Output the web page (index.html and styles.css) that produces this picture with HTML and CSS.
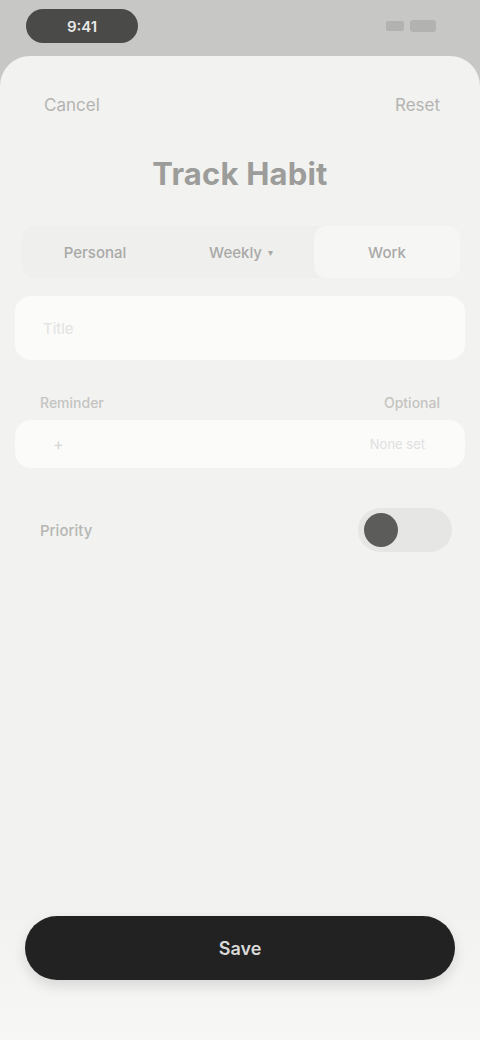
FILE: index.html
```html
<!DOCTYPE html>
<html>
<head>
<meta charset="utf-8">
<link rel="stylesheet" href="styles.css">
</head>
<body>
<div class="screen">
  <div class="statusbar">
    <div class="time-pill">9:41</div>
    <div class="status-icons">
      <span class="bars"></span>
      <span class="battery"></span>
    </div>
  </div>
  <div class="sheet">
    <div class="nav">
      <span class="nav-btn">Cancel</span>
      <span class="nav-btn">Reset</span>
    </div>
    <h1 class="title">Track Habit</h1>
    <div class="segmented">
      <div class="seg">Personal</div>
      <div class="seg">Weekly <span class="chev">&#9662;</span></div>
      <div class="seg seg-active">Work</div>
    </div>
    <div class="field">
      <span class="placeholder">Title</span>
    </div>
    <div class="label-row">
      <span class="label">Reminder</span>
      <span class="label">Optional</span>
    </div>
    <div class="field field-sm">
      <span class="field-icon">+</span>
      <span class="field-value">None set</span>
    </div>
    <div class="toggle-row">
      <span class="toggle-label">Priority</span>
      <div class="toggle"><span class="knob"></span></div>
    </div>
    <div class="spacer"></div>
    <div class="footer">
      <button class="primary">Save</button>
    </div>
  </div>
</div>
</body>
</html>
```
FILE: styles.css
```css
* { box-sizing: border-box; }
html, body { margin: 0; padding: 0; }
body {
  font-family: Inter, "Noto Sans", "Liberation Sans", sans-serif;
  color: #1c1c1c;
}
.screen {
  width: 480px;
  height: 1040px;
  background: #c7c7c5;
  display: flex;
  flex-direction: column;
  overflow: hidden;
}
.statusbar {
  height: 56px;
  display: flex;
  align-items: center;
  justify-content: space-between;
  padding: 0 44px 4px 26px;
}
.time-pill {
  width: 112px;
  height: 34px;
  border-radius: 17px;
  background: #4a4a48;
  color: #e8e8e8;
  font-size: 15px;
  font-weight: 600;
  display: flex;
  align-items: center;
  justify-content: center;
}
.status-icons {
  display: flex;
  align-items: center;
  gap: 6px;
}
.bars {
  width: 18px;
  height: 10px;
  background: #b2b2b0;
  border-radius: 2px;
}
.battery {
  width: 26px;
  height: 12px;
  border-radius: 3px;
  background: #b2b2b0;
}
.sheet {
  flex: 1;
  background: #f2f2f0;
  border-radius: 30px 30px 0 0;
  display: flex;
  flex-direction: column;
}
.nav {
  display: flex;
  justify-content: space-between;
  padding: 39px 40px 0 44px;
  height: 59px;
}
.nav-btn {
  font-size: 17px;
  color: #b4b4b2;
  line-height: 20px;
}
.title {
  margin: 41px 0 0;
  text-align: center;
  font-size: 31px;
  line-height: 36px;
  font-weight: 700;
  color: #9c9c9a;
  letter-spacing: 0.2px;
}
.segmented {
  margin: 34px 20px 0 22px;
  height: 52px;
  display: grid;
  grid-template-columns: 1fr 1fr 1fr;
  background: #efefed;
  border-radius: 14px;
  padding: 0;
}
.seg {
  display: flex;
  align-items: center;
  justify-content: center;
  font-size: 15px;
  color: #a9a9a7;
  font-weight: 500;
}
.chev { font-size: 10px; margin-left: 6px; }
.seg-active {
  background: #f6f6f5;
  border-radius: 12px;
}
.field {
  margin: 18px 15px 0;
  height: 64px;
  background: #fbfbfa;
  border-radius: 16px;
  display: flex;
  align-items: center;
  padding: 0 28px;
}
.placeholder {
  font-size: 15px;
  color: #e2e2e0;
}
.label-row {
  margin: 32px 40px 0 40px;
  display: flex;
  justify-content: space-between;
  height: 20px;
  align-items: center;
}
.label {
  font-size: 14px;
  color: #c4c4c2;
  font-weight: 500;
}
.field-sm {
  margin-top: 8px;
  height: 48px;
  justify-content: space-between;
  padding: 0 40px 0 38px;
}
.field-icon {
  font-size: 16px;
  color: #d6d6d4;
}
.field-value {
  font-size: 13px;
  color: #e0e0de;
}
.toggle-row {
  margin: 38px 28px 0 40px;
  display: flex;
  justify-content: space-between;
  align-items: center;
  height: 48px;
}
.toggle-label {
  font-size: 15px;
  color: #b6b6b4;
  font-weight: 500;
}
.toggle {
  width: 94px;
  height: 44px;
  border-radius: 22px;
  background: #e6e6e4;
  display: flex;
  align-items: center;
  padding: 0 6px;
}
.knob {
  width: 34px;
  height: 34px;
  border-radius: 50%;
  background: #5c5c5a;
}
.spacer { flex: 1; }
.footer {
  padding: 0 25px 60px;
  background: linear-gradient(#f2f2f0, #f7f7f6);
}
.primary {
  width: 100%;
  height: 64px;
  border: none;
  border-radius: 32px;
  background: #222222;
  color: #d9d9d9;
  font-family: inherit;
  font-size: 18px;
  font-weight: 600;
  box-shadow: 0 6px 14px rgba(0,0,0,0.12);
}
```
